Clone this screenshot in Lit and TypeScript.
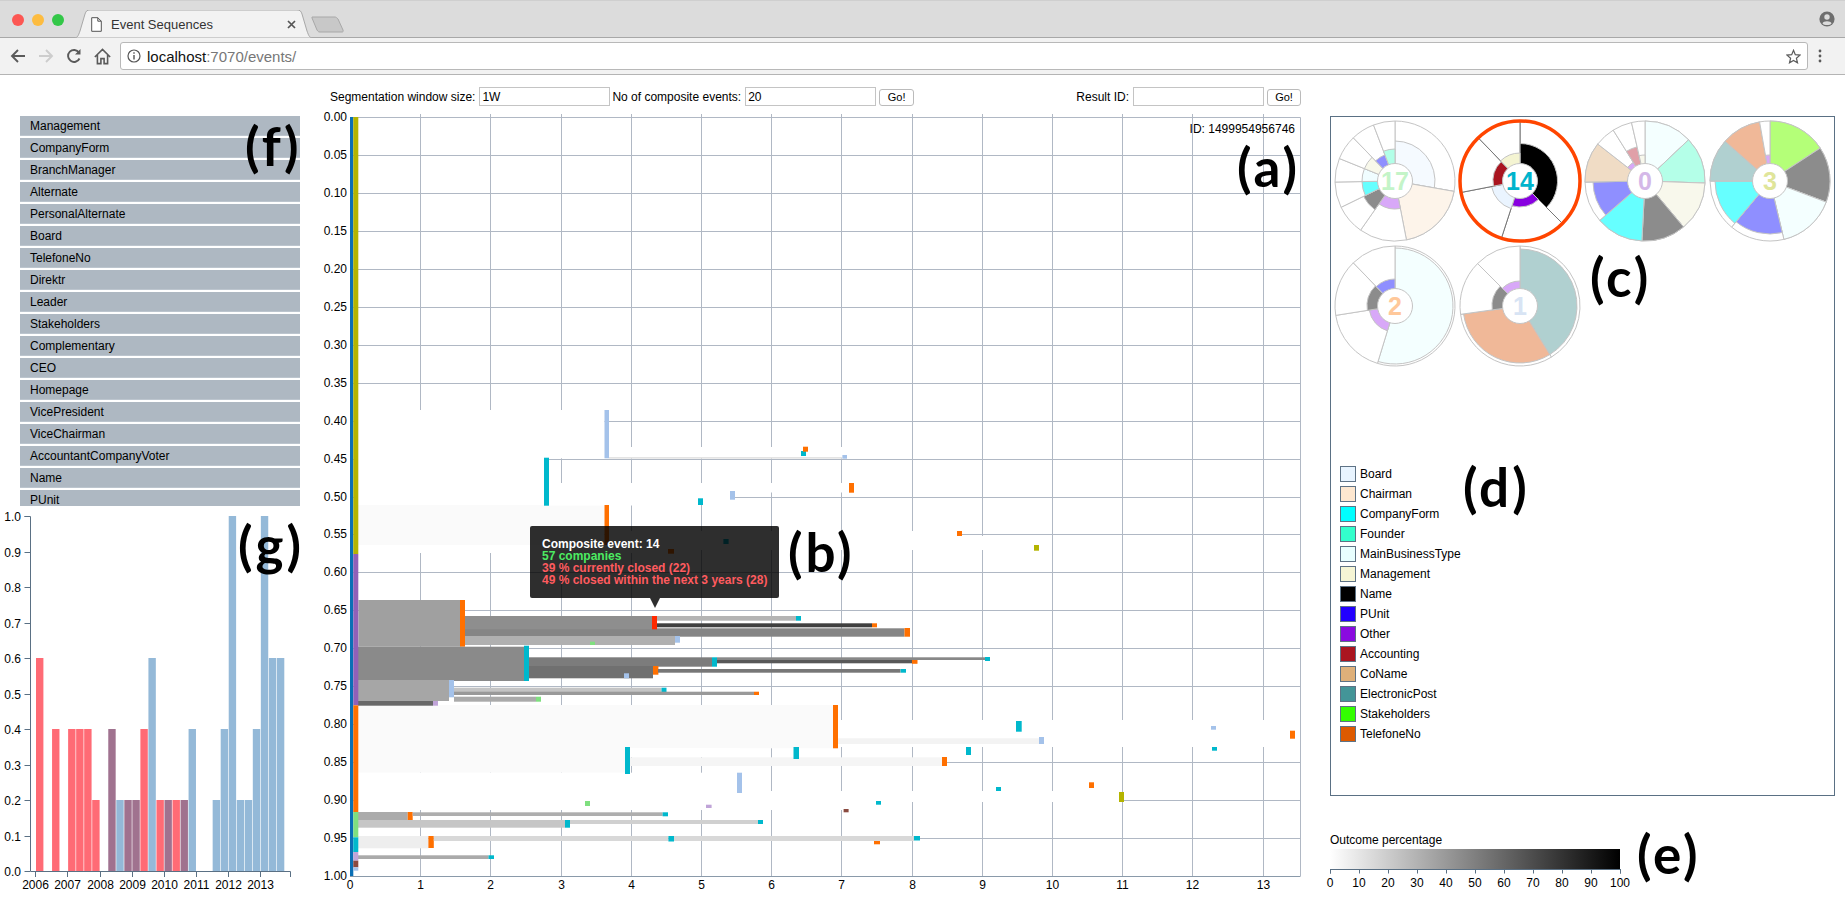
import { LitElement, html, css, svg } from "lit";
import { customElement } from "lit/decorators.js";

type R = [number, number, number, number, string];
const OR = "#ff7000", CY = "#00b8cc", LB = "#a4c2ea", GR = "#7fdf7f", LP = "#c0a4d8", OL = "#b4b400", BR = "#8a4a40", W = "#ffffff", F = "#fafafa";

const rects: R[] = [
  [358, 410, 604.5, 458.3, W], [358, 458, 544, 505.7, W], [358, 505, 604.5, 545, F], [358, 545, 668, 553, W],
  [609, 447, 842.4, 457, W], [609, 457, 842.4, 458.7, "#e4e4e4"], [549, 483, 849, 492.5, W], [549, 492, 730, 500, W], [549, 498, 698, 505.5, W],
  [609, 531, 957, 550, W], [957, 536, 1034, 550, W],
  [358, 705, 833, 748.3, F], [358, 748, 625, 772.7, F], [838, 720, 1300, 747, W], [630, 748, 740, 757, W],
  [358, 772.7, 737, 793, W], [358, 791, 1119, 802, W], [358, 802, 850, 810, W],
  [604.5, 410, 609, 458.3, LB], [544, 457.7, 549, 505.7, CY], [604.5, 505, 609, 545, OR],
  [801, 451, 806, 456, CY], [803, 446.7, 808, 451.7, OR], [842.4, 455, 847, 458.7, LB], [849, 483, 854, 492.7, OR],
  [730, 491, 735, 499.7, LB], [698, 498.3, 703, 505, CY], [957, 531, 962, 536, OR], [1034, 545, 1039, 550.7, OL],
  [723.4, 539, 728.6, 544, CY], [668, 549, 674, 553.7, OR],
  [358.4, 600, 460.2, 646.7, "#a0a0a0"], [460, 600, 465, 646.7, OR],
  [465, 628.3, 904.5, 636.7, "#858585"], [904.5, 628, 910, 636.7, OR],
  [465, 616, 652, 629.3, "#8e8e8e"], [652, 616, 657, 629.3, "#ff2a00"],
  [657, 616, 796, 620.7, "#b4b4b4"], [796, 616, 801, 620.7, CY],
  [657, 623.3, 872, 627.3, "#404040"], [872, 623.3, 877, 627.3, OR],
  [465, 636, 675, 645, "#b0b0b0"], [675, 636, 680, 642.7, LB], [590, 641.7, 595, 645, GR],
  [358, 646.7, 524, 681, "#8a8a8a"], [524, 645.7, 529, 681, CY],
  [717, 657.3, 985, 660, "#888888"], [985, 657, 990, 661, CY],
  [529, 657.3, 712, 666.7, "#7c7c7c"], [712, 657.3, 717, 666.7, CY],
  [717, 660, 912, 663.3, "#585858"], [912, 660, 917.5, 663.8, OR],
  [529, 666, 653, 678.3, "#707070"], [653, 666, 658.4, 674.7, OR],
  [658, 669, 900.5, 672.7, "#777777"], [900.6, 669, 906, 672.7, CY], [624, 673.3, 629, 678.3, LB],
  [358, 680, 449, 701, "#a6a6a6"], [449, 680, 454, 697.3, LB],
  [454, 687.7, 661.5, 692.7, "#c4c4c4"], [661.5, 687.7, 666.5, 692.7, CY],
  [454, 691.7, 754, 695, "#999999"], [754, 691.7, 759, 695, OR],
  [454, 696.7, 536, 701.7, "#aaaaaa"], [536, 696.7, 541, 701.7, GR],
  [358, 701, 433, 705.7, "#686868"], [433, 701, 438, 705.7, LP],
  [833, 705, 838, 748.3, OR], [625, 747, 630, 774, CY],
  [838, 738.3, 1039, 744, "#f3f3f3"], [1039, 737, 1044, 744, LB],
  [630, 757.3, 942, 766, "#f5f5f5"], [942, 757, 947, 766, OR],
  [793.5, 747, 799, 759, CY], [966, 747, 971, 755, CY], [1016, 721, 1021.7, 731.7, CY],
  [1211, 726, 1216, 729.7, LB], [1290, 730.7, 1295, 738.7, OR], [1212, 747, 1217, 750.7, CY],
  [737, 772.7, 742, 793, LB], [1089, 782.3, 1094, 788, OR], [996, 787, 1001, 791, CY], [1119, 792, 1124, 802, OL],
  [585, 801, 590, 806, GR], [706, 804.7, 711.6, 808, LP], [876, 801, 881, 804.7, CY], [843.6, 809, 848.6, 812.3, BR],
  [358, 812, 407.7, 820.7, "#ababab"], [407.7, 812, 412.7, 821, OR],
  [412.7, 812.3, 662.6, 816, "#aeaeae"], [662.6, 812.3, 668, 816.3, CY],
  [358, 820, 565, 827.7, "#c6c6c6"], [565, 820, 570, 827.7, CY],
  [570, 820, 758, 824, "#d0d0d0"], [758, 820, 763, 824, CY],
  [358, 836, 428.4, 848.3, "#eeeeee"], [428.4, 836, 433.8, 848, OR],
  [433.8, 836, 668.4, 841, "#d8d8d8"], [668.4, 836, 674, 841.5, CY],
  [674, 836, 914, 841, "#d8d8d8"], [914, 836, 920, 840.5, CY], [874, 841, 880, 844.3, OR],
  [358, 855.3, 488.5, 859, "#aaaaaa"], [488.5, 855.3, 494, 859, CY],
];

const band: [number, number, string][] = [
  [117, 554, OL], [554, 705.3, "#9060b8"], [705.3, 812, OR], [812, 837.3, GR], [837.3, 852, CY], [852, 860.7, LP], [860.7, 867.3, BR], [867.3, 870.7, LB],
];

const RED = "#ff6b75", BL = "#94b9d8", PU = "#a0728f";
const bars: [number, number, string][] = [
  [0, .6, RED], [2, .4, RED], [4, .4, RED], [5, .4, RED], [6, .4, RED], [7, .2, RED], [9, .4, PU], [10, .2, BL], [11, .2, PU], [12, .2, PU], [13, .4, RED],
  [14, .6, BL], [15, .2, RED], [16, .2, PU], [17, .2, RED], [18, .2, PU], [19, .4, BL], [22, .2, BL], [23, .4, BL], [24, 1, BL], [25, .2, BL], [26, .2, BL], [27, .4, BL], [28, 1, BL], [29, .6, BL], [30, .6, BL],
];

const listItems = ["Management", "CompanyForm", "BranchManager", "Alternate", "PersonalAlternate", "Board", "TelefoneNo", "Direktr", "Leader", "Stakeholders", "Complementary", "CEO", "Homepage", "VicePresident", "ViceChairman", "AccountantCompanyVoter", "Name", "PUnit"];

const legend: [string, string][] = [
  ["Board", "#e8f4ff"], ["Chairman", "#fde7d0"], ["CompanyForm", "#00ffff"], ["Founder", "#33ffcc"], ["MainBusinessType", "#e8ffff"], ["Management", "#f5f5d5"], ["Name", "#000000"],
  ["PUnit", "#2200ff"], ["Other", "#8a0be0"], ["Accounting", "#aa1520"], ["CoName", "#deb07a"], ["ElectronicPost", "#439598"], ["Stakeholders", "#33ff00"], ["TelefoneNo", "#dd5a00"],
];

type Sec = [number, number, string];
interface Pie { cx: number; cy: number; n: string; col: string; secs: Sec[]; sel?: boolean }
const pies: Pie[] = [
  { cx: 1395, cy: 181, n: "17", col: "#c4f4c8", secs: [[100, 40, "#f5faff"], [169, 60, "#fdf4ea"], [215, 28, "#d8a8f8"], [244, 35, "#8c8c8c"], [269, 33, "#66ffff"], [292, 33, "#f0fdff"], [316, 33, "#f8f8ea"], [339, 28, "#8f8fff"], [360, 32, "#b2ffe8"]] },
  { cx: 1520, cy: 181, n: "14", col: "#00b4cc", sel: true, secs: [[135, 37.5, "#000000"], [198, 26, "#8800e0"], [259, 29, "#eaf4ff"], [316, 27, "#a91520"], [360, 28, "#f4f4d2"]] },
  { cx: 1645, cy: 181, n: "0", col: "#d4b8e8", secs: [[46.6, 60, "#f4ffff"], [92, 60, "#b4ffe8"], [140, 60, "#f8f8ec"], [183, 60, "#8c8c8c"], [229, 60, "#66ffff"], [269, 52, "#8f8fff"], [308, 60, "#f0dcc5"], [328, 22, "#d8a8f8"], [347, 35, "#e0a0a8"], [360, 26, "#f8f8ec"]] },
  { cx: 1770, cy: 181, n: "3", col: "#dfe59a", secs: [[56.8, 60, "#b4ff78"], [110.6, 60, "#8c8c8c"], [166.6, 60, "#f4ffff"], [219.8, 53, "#8f8fff"], [270, 55, "#66ffff"], [311.5, 60, "#b0d0d0"], [350, 60, "#f0b898"], [360, 26, "#d8a8f8"]] },
  { cx: 1395, cy: 306, n: "2", col: "#ffc89a", secs: [[197, 58, "#f4ffff"], [261, 26, "#d8a8f8"], [316, 28, "#8c8c8c"], [360, 27, "#8f8fff"]] },
  { cx: 1520, cy: 306, n: "1", col: "#d8e4f4", secs: [[148.5, 57, "#b0d0d0"], [262, 57, "#f0b898"], [315, 28, "#8c8c8c"], [360, 25, "#d8a8f8"]] },
];

function wedge(cx: number, cy: number, r: number, a0: number, a1: number) {
  const p = (a: number) => {
    const t = (a * Math.PI) / 180;
    return `${(cx + r * Math.sin(t)).toFixed(2)} ${(cy - r * Math.cos(t)).toFixed(2)}`;
  };
  return `M${cx} ${cy}L${p(a0)}A${r} ${r} 0 ${a1 - a0 > 180 ? 1 : 0} 1 ${p(a1)}Z`;
}

function pie(d: Pie) {
  let a = 0;
  const stroke = d.sel ? "#777777" : "#c4c4c4";
  const parts = d.secs.map(([end, r, col]) => {
    const s = a;
    a = end;
    return svg`<path d=${wedge(d.cx, d.cy, 60, s, end)} fill="#ffffff" stroke=${stroke} stroke-width="1"></path>
      <path d=${wedge(d.cx, d.cy, r, s, end)} fill=${col} stroke="#c4c4c4" stroke-width="1"></path>`;
  });
  return svg`<g>${parts}
    ${d.sel ? svg`<circle cx=${d.cx} cy=${d.cy} r="60" fill="none" stroke="#ff4500" stroke-width="3.5"></circle>` : ""}
    <circle cx=${d.cx} cy=${d.cy} r="17.5" fill="#ffffff" stroke="#c4c4c4" stroke-width="1"></circle>
    <text class="pienum" x=${d.cx} y=${d.cy + 9} text-anchor="middle" fill=${d.col}>${d.n}</text></g>`;
}

@customElement("app-root")
export class AppRoot extends LitElement {
  static styles = css`
    :host { display: block; position: relative; width: 1845px; height: 921px; overflow: hidden; background: #fff; font: 12px "Liberation Sans", Arial, sans-serif; color: #000; }
    svg { display: block; }
    svg text { font: 12px "Liberation Sans", Arial, sans-serif; }
    .chrome { height: 75px; background: #f2f2f2; border-bottom: 1px solid #b4b4b4; box-sizing: border-box; }
    .tabstrip { height: 38px; background: #dcdcdc; border-bottom: 1px solid #a8a8a8; box-sizing: border-box; border-top: 1px solid #cfcfcf; display: flex; align-items: flex-end; position: relative; }
    .lights { display: flex; gap: 8px; position: absolute; left: 12px; top: 13px; }
    .light { width: 12px; height: 12px; border-radius: 50%; }
    .l1 { background: #fc5753; } .l2 { background: #fdbc40; } .l3 { background: #33c748; }
    .tab { position: relative; margin-left: 73px; width: 241px; height: 28px; margin-bottom: -1px; flex: none; display: flex; align-items: center; }
    .tabshape { position: absolute; left: 0; top: 0; }
    .tabdoc { position: relative; margin-left: 18px; }
    .tabtitle { position: relative; margin-left: 9px; width: 176px; font-size: 13px; color: #333; }
    .tabclose { position: relative; }
    .newtab { margin-left: -3px; margin-bottom: 4px; flex: none; }
    .profile { margin-left: auto; margin-right: 10px; margin-bottom: 10px; }
    .toolbar { height: 36px; display: flex; align-items: center; padding-left: 4px; }
    .nav { width: 28px; height: 28px; display: flex; align-items: center; justify-content: center; flex: none; }
    .omni { margin-left: 4px; width: 1688px; height: 28px; box-sizing: border-box; background: #fff; border: 1px solid #b8b8b8; border-radius: 3px; display: flex; align-items: center; padding: 0 6px; flex: none; }
    .url { margin-left: 6px; font-size: 15px; color: #777; }
    .url b { font-weight: 400; color: #111; }
    .star { margin-left: auto; }
    .dots { margin-left: 10px; flex: none; }
    .page { display: grid; grid-template-columns: 320px 1010px 515px; height: 846px; }
    .left { padding: 41px 0 0 20px; }
    .list { width: 280px; height: 390px; overflow: hidden; display: flex; flex-direction: column; gap: 2px; }
    .item { flex: none; height: 20px; line-height: 20px; background: #aeb8c2; padding-left: 10px; border-bottom: 1px solid #bcc5ce; box-sizing: border-box; }
    .barsvg { margin-left: -20px; }
    .center { position: relative; }
    .controls { height: 19px; margin-top: 12px; padding: 0 29px 0 10px; display: flex; align-items: center; }
    .controls label { margin-right: 4px; }
    .controls label.next { margin-left: 2px; }
    .controls input { width: 131px; height: 19px; box-sizing: border-box; border: 1px solid #c4c4c4; padding: 0 2px; font: 12px "Liberation Sans", Arial, sans-serif; margin: 0; outline: none; }
    .controls button { width: 35px; height: 17px; margin: 1px 0 0 3px; padding: 0; background: #fff; border: 1px solid #bbb; border-radius: 3px; font: 11px "Liberation Sans", Arial, sans-serif; color: #000; }
    .controls button.last { width: 34px; }
    .gap { margin-left: auto; }
    .chart { margin-top: 2px; }
    .tip { position: absolute; left: 210px; top: 451px; width: 249px; height: 72px; box-sizing: border-box; padding: 12px; background: rgba(0, 0, 0, .82); border-radius: 2px; font-weight: 700; line-height: 12px; color: #fff; white-space: nowrap; }
    .tip::after { content: ""; position: absolute; left: 120px; top: 100%; border: 5px solid transparent; border-top: 10px solid rgba(0, 0, 0, .82); border-bottom: 0; }
    .green { color: #4ceb62; }
    .red { color: #ff5b5f; }
    .right { padding-top: 41px; }
    .panel { width: 505px; height: 680px; box-sizing: border-box; border: 1px solid #5a7084; }
    .legend { display: flex; flex-direction: column; gap: 4px; padding-left: 9px; }
    .lrow { display: flex; align-items: center; gap: 4px; height: 16px; }
    .swatch { width: 16px; height: 16px; box-sizing: border-box; border: 1px solid #5e7285; }
    .outcome { margin-top: 37px; line-height: 14px; }
    .grad { width: 290px; height: 20px; margin-top: 2px; background: linear-gradient(to right, #fff, #000); }
    .gaxis { margin-left: -5px; }
    .tag { position: absolute; font: 700 53px Lato, "Liberation Sans", sans-serif; letter-spacing: 3px; line-height: 47px; color: #000; }
    .ta { left: 1237px; top: 143px; } .tb { left: 788px; top: 528px; } .tc { left: 1590px; top: 253px; } .td { left: 1463px; top: 463px; }
    .te { left: 1637px; top: 830px; } .tf { left: 245px; top: 122px; } .tg { left: 238px; top: 521px; }
    .pienum { font: 700 25px "Liberation Sans", Arial, sans-serif; }
  `;

  private chromeBar() {
    return html`<div class="chrome">
      <div class="tabstrip">
        <div class="lights"><span class="light l1"></span><span class="light l2"></span><span class="light l3"></span></div>
        <div class="tab">
          <svg class="tabshape" width="241" height="28" viewBox="0 0 241 28"><path d="M0 28C5 28 5 26 7 21L12 4C13 1 14 0 17 0H224C227 0 228 1 229 4L234 21C236 26 236 28 241 28Z" fill="#f2f2f2" stroke="#a8a8a8"></path></svg>
          <svg class="tabdoc" width="11" height="15" viewBox="0 0 11 15"><path d="M.7.7H6.8L10.3 4.2V14.3H.7ZM6.8.7V4.2H10.3" fill="#fff" stroke="#555" stroke-width="1"></path></svg>
          <span class="tabtitle">Event Sequences</span>
          <svg class="tabclose" width="9" height="9" viewBox="0 0 9 9"><path d="M1 1L8 8M8 1L1 8" stroke="#555" stroke-width="1.7"></path></svg>
        </div>
        <svg class="newtab" width="33" height="17" viewBox="0 0 33 17"><path d="M1 1H24C25 1 26 2 27 3L32 14C32.5 15.500 32 16 31 16H9C7.500 16 7 15.500 6 14L1 2Z" fill="#c8c8c8" stroke="#a8a8a8"></path></svg>
        <svg class="profile" width="16" height="16" viewBox="0 0 16 16"><circle cx="8" cy="8" r="7.600" fill="#6e6e6e"></circle><circle cx="8" cy="6" r="2.700" fill="#dcdcdc"></circle><path d="M3.500 12.500C4 9.500 12 9.500 12.500 12.500C11 14.500 5 14.500 3.500 12.500Z" fill="#dcdcdc"></path></svg>
      </div>
      <div class="toolbar">
        <span class="nav"><svg width="16" height="16" viewBox="0 0 16 16"><path d="M15 8H2M8 2L2 8L8 14" fill="none" stroke="#5a5a5a" stroke-width="1.900"></path></svg></span>
        <span class="nav"><svg width="16" height="16" viewBox="0 0 16 16"><path d="M1 8H14M8 2L14 8L8 14" fill="none" stroke="#cdcdcd" stroke-width="1.900"></path></svg></span>
        <span class="nav"><svg width="16" height="16" viewBox="0 0 16 16"><path d="M13.500 10.500A6 6 0 1 1 13 4.500" fill="none" stroke="#5a5a5a" stroke-width="1.900"></path><path d="M14.500 1V6.500H9Z" fill="#5a5a5a"></path></svg></span>
        <span class="nav"><svg width="17" height="17" viewBox="0 0 16 16"><path d="M.8 8.500L8 1.300L15.200 8.500M3.200 6.500V14.700H6.500V10H9.500V14.700H12.800V6.500" fill="none" stroke="#5a5a5a" stroke-width="1.500"></path></svg></span>
        <div class="omni">
          <svg width="14" height="14" viewBox="0 0 14 14"><circle cx="7" cy="7" r="6" fill="none" stroke="#555" stroke-width="1.200"></circle><path d="M7 6V10.500M7 3.200V4.800" stroke="#555" stroke-width="1.400"></path></svg>
          <span class="url"><b>localhost</b>:7070/events/</span>
          <svg class="star" width="15" height="15" viewBox="0 0 15 15"><path d="M7.500 1.300L9.300 5.700L14 6.100L10.400 9.200L11.500 13.800L7.500 11.400L3.500 13.800L4.600 9.200L1 6.100L5.700 5.700Z" fill="none" stroke="#5a5a5a" stroke-width="1.200"></path></svg>
        </div>
        <svg class="dots" width="4" height="14" viewBox="0 0 4 14"><circle cx="2" cy="2" r="1.400" fill="#5a5a5a"></circle><circle cx="2" cy="7" r="1.400" fill="#5a5a5a"></circle><circle cx="2" cy="12" r="1.400" fill="#5a5a5a"></circle></svg>
      </div>
    </div>`;
  }

  private barChart() {
    const ax = "#5a7084";
    const yt = [0, .1, .2, .3, .4, .5, .6, .7, .8, .9, 1];
    const years = [2006, 2007, 2008, 2009, 2010, 2011, 2012, 2013];
    return html`<svg class="barsvg" width="320" height="415" viewBox="0 506 320 415">
      ${bars.map(([i, v, c]) => svg`<rect x=${36 + i * 8.03} y=${871 - v * 355} width="7.400" height=${v * 355} fill=${c}></rect>`)}
      <path d="M24.500 516.500H30.500V871.500H290.500V877" fill="none" stroke=${ax}></path>
      ${yt.map((v) => {
        const y = Math.round(871 - v * 355) + .5;
        return svg`<path d="M24.500 ${y}H30" stroke=${ax}></path><text x="21" y=${y + 4} text-anchor="end">${v.toFixed(1)}</text>`;
      })}
      ${years.map((yr, i) => {
        const x = Math.round(35.3 + i * 32.14) + .5;
        return svg`<path d="M${x} 871V877" stroke=${ax}></path><text x=${x} y="889" text-anchor="middle">${yr}</text>`;
      })}
    </svg>`;
  }

  private mainChart() {
    const grid = "#b0b8c4";
    const hs = Array.from({ length: 21 }, (_, i) => i);
    const vs = Array.from({ length: 14 }, (_, i) => i);
    return html`<svg class="chart" width="1010" height="813" viewBox="320 108 1010 813">
      ${hs.slice(1, 20).map((i) => {
        const y = Math.round(117 + i * 37.95) + .5;
        return svg`<path d="M350 ${y}H1300" stroke=${grid}></path>`;
      })}
      ${vs.slice(1).map((i) => {
        const x = Math.round(350 + i * 70.2) + .5;
        return svg`<path d="M${x} 114V876" stroke=${grid}></path><text x=${x} y="889" text-anchor="middle">${i}</text>`;
      })}
      <text x="350" y="889" text-anchor="middle">0</text>
      <path d="M350 117.500H1300.500V876" fill="none" stroke=${grid}></path>
      ${rects.map(([a, b, c, d, f]) => svg`<rect x=${a} y=${b} width=${c - a} height=${d - b} fill=${f}></rect>`)}
      <rect x="350" y="117" width="3.300" height="759" fill="#0a6fb5"></rect>
      ${band.map(([a, b, c]) => svg`<rect x="353.300" y=${a} width="5" height=${b - a} fill=${c}></rect>`)}
      <path d="M350 876.500H1300.500" stroke="#8a9aaa"></path>
      ${hs.map((i) => svg`<text x="347" y=${121 + i * 37.95} text-anchor="end">${(i * .05).toFixed(2)}</text>`)}
      <text x="1295" y="133" text-anchor="end">ID: 1499954956746</text>
    </svg>`;
  }

  render() {
    const ticks = Array.from({ length: 11 }, (_, i) => i * 10);
    return html`
      ${this.chromeBar()}
      <div class="page">
        <section class="left">
          <div class="list">${listItems.map((t) => html`<div class="item">${t}</div>`)}</div>
          ${this.barChart()}
        </section>
        <section class="center">
          <div class="controls">
            <label>Segmentation window size:</label><input value="1W" />
            <label class="next">No of composite events:</label><input value="20" /><button>Go!</button>
            <span class="gap"></span>
            <label>Result ID:</label><input /><button class="last">Go!</button>
          </div>
          ${this.mainChart()}
          <div class="tip">
            <div>Composite event: 14</div>
            <div class="green">57 companies</div>
            <div class="red">39 % currently closed (22)</div>
            <div class="red">49 % closed within the next 3 years (28)</div>
          </div>
        </section>
        <section class="right">
          <div class="panel">
            <svg width="503" height="349" viewBox="1331 117 503 349">${pies.map(pie)}</svg>
            <div class="legend">
              ${legend.map(([n, c]) => html`<div class="lrow"><span class="swatch" style="background:${c}"></span><span>${n}</span></div>`)}
            </div>
          </div>
          <div class="outcome">Outcome percentage</div>
          <div class="grad"></div>
          <svg class="gaxis" width="320" height="26" viewBox="1325 869 320 26">
            <path d="M1330.500 873.500V869.500H1620.500V873.500" fill="none" stroke="#5a7084"></path>
            ${ticks.map((t) => svg`<path d="M${1330.5 + t * 2.9} 869V873.500" stroke="#5a7084"></path><text x=${1330 + t * 2.9} y="887" text-anchor="middle">${t}</text>`)}
          </svg>
        </section>
      </div>
      <span class="tag ta">(a)</span><span class="tag tb">(b)</span><span class="tag tc">(c)</span><span class="tag td">(d)</span><span class="tag te">(e)</span><span class="tag tf">(f)</span><span class="tag tg">(g)</span>
    `;
  }
}
